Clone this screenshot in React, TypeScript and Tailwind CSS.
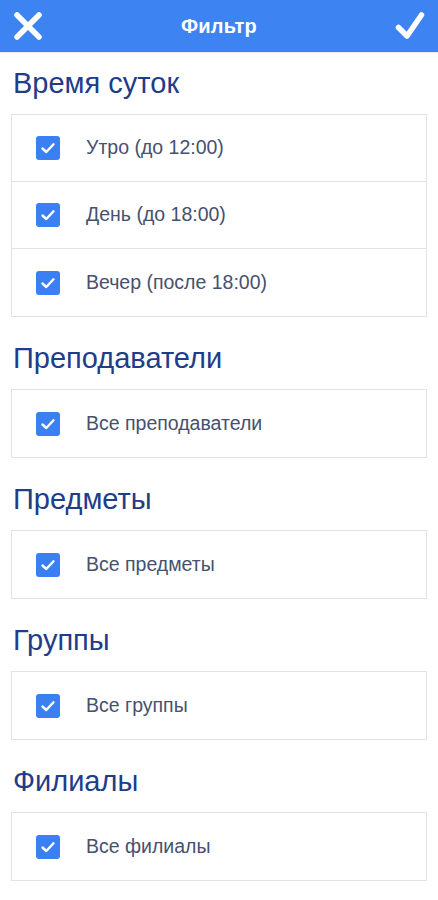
import React from "react";

const font = { fontFamily: '"Liberation Sans", Arial, sans-serif' };

function Checkbox() {
  return (
    <div className="w-[24px] h-[24px] rounded-[3px] bg-[#3a80f2] flex items-center justify-center shrink-0">
      <svg width="16" height="16" viewBox="0 0 16 16" fill="none">
        <polyline points="2.5,8.5 6.3,12 13.5,4.3" stroke="white" strokeWidth="2.4" strokeLinecap="round" strokeLinejoin="round" />
      </svg>
    </div>
  );
}

function Section({ title, items, first }: { title: string; items: string[]; first?: boolean }) {
  return (
    <section className={first ? "" : "mt-[27px]"}>
      <h2 className="px-[13px] text-[29px] leading-[28px] text-[#213c88] mb-[17px]">{title}</h2>
      <div className="mx-[11px] border border-[#e2e2e2] divide-y divide-[#e2e2e2] bg-white">
        {items.map((it) => (
          <div key={it} className="h-[67px] flex items-center pl-[24px]">
            <Checkbox />
            <span className="ml-[26px] text-[19.5px] text-[#45516f]">{it}</span>
          </div>
        ))}
      </div>
    </section>
  );
}

export default function App() {
  return (
    <div style={font} className="w-[438px] h-[900px] bg-white overflow-hidden">
      <header className="h-[52px] bg-[#3d84f2] flex items-center justify-between px-[13px] shadow-[0_1px_1px_rgba(0,0,0,0.08)]">
        <svg width="30" height="30" viewBox="0 0 30 30" fill="none">
          <path d="M4 4 L26 26 M26 4 L4 26" stroke="white" strokeWidth="5.5" strokeLinecap="round" />
        </svg>
        <h1 className="text-white text-[20px] font-bold tracking-[0.2px]">Фильтр</h1>
        <svg width="30" height="30" viewBox="0 0 30 30" fill="none">
          <polyline points="3.5,16.5 12,25 26.5,4" stroke="white" strokeWidth="5.5" strokeLinecap="round" strokeLinejoin="round" />
        </svg>
      </header>
      <main className="pt-[17px]">
        <Section first title="Время суток" items={["Утро (до 12:00)", "День (до 18:00)", "Вечер (после 18:00)"]} />
        <Section title="Преподаватели" items={["Все преподаватели"]} />
        <Section title="Предметы" items={["Все предметы"]} />
        <Section title="Группы" items={["Все группы"]} />
        <Section title="Филиалы" items={["Все филиалы"]} />
      </main>
    </div>
  );
}
